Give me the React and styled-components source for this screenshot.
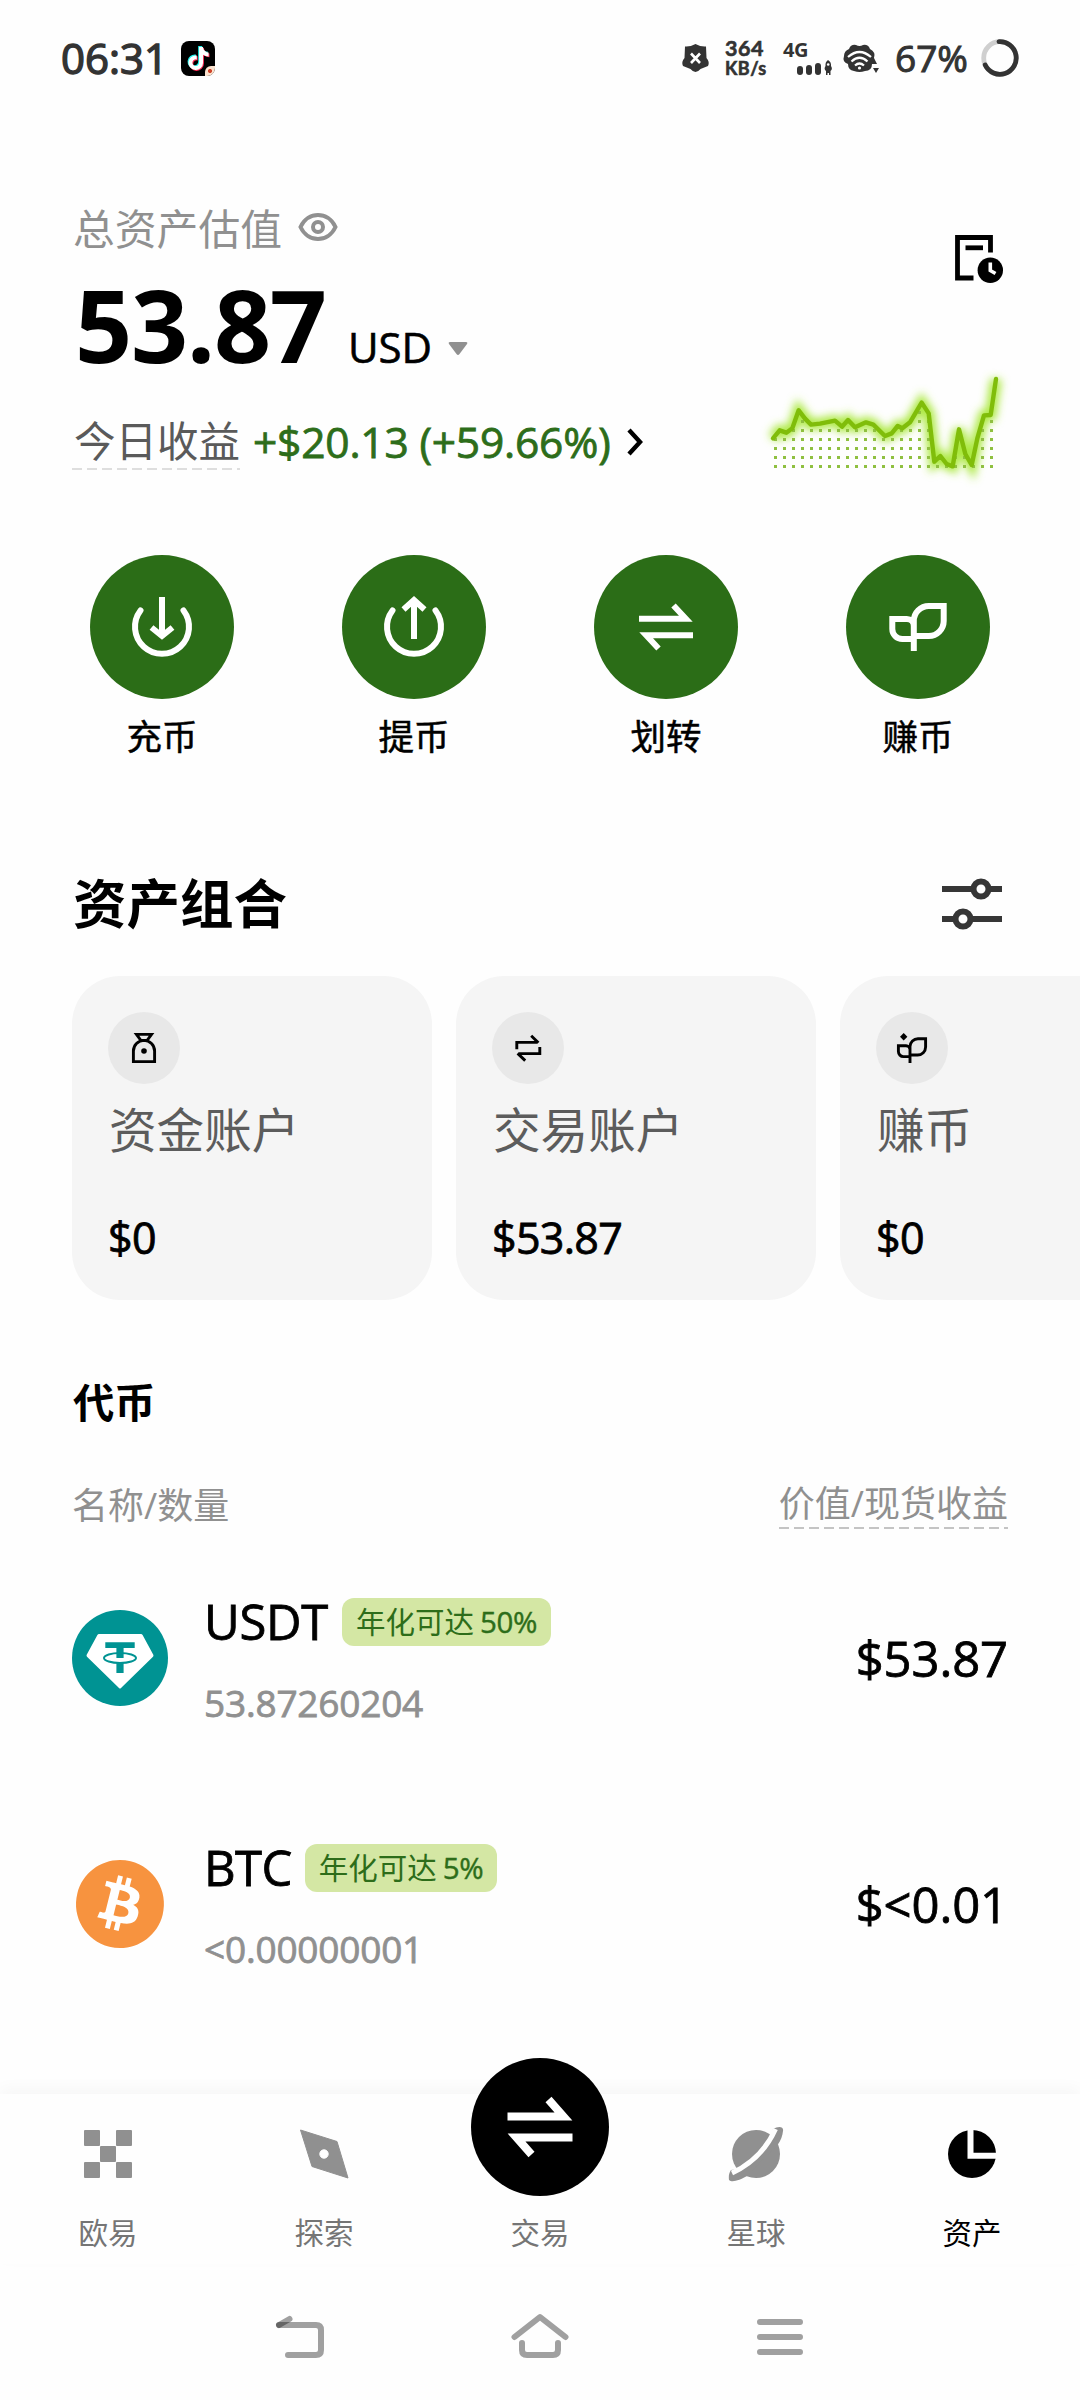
import React from "react";
import styled, { createGlobalStyle } from "styled-components";
import { FaTiktok } from "react-icons/fa6";
import { SiBitcoin } from "react-icons/si";

const Global = createGlobalStyle`
  * { box-sizing: border-box; }
  body {
    margin: 0;
    background: #fefefe;
    font-family: "Open Sans", "Noto Sans CJK SC", sans-serif;
    color: #000;
  }
  svg { display: block; flex: none; overflow: visible; }
`;

const Screen = styled.div`
  width: 1080px;
  height: 2400px;
  overflow: hidden;
  display: flex;
  flex-direction: column;
  white-space: nowrap;
`;

/* status bar */
const StatusBar = styled.header`
  height: 116px;
  padding: 0 61px 0 61px;
  display: flex;
  align-items: center;
  color: #333;
`;
const Clock = styled.span`
  width: 120px;
  font-size: 42px;
  line-height: 60px;
  -webkit-text-stroke: 1.4px currentColor;
`;
const AppBadge = styled.span`
  width: 34px;
  height: 35px;
  border-radius: 8px;
  background: #000;
  display: grid;
  place-items: center;
  overflow: hidden;
`;
const Layer = styled.span`
  grid-area: 1 / 1;
  color: ${(p) => p.$color};
  transform: translate(${(p) => p.$shift}px, ${(p) => p.$shift}px);
`;
const Corner = styled.span`
  grid-area: 1 / 1;
  place-self: end;
  width: 10px;
  height: 10px;
  border-radius: 6px 0 0 0;
  background: radial-gradient(circle at 50% 50%, #d0452b 1.6px, #fbe3cf 2.4px);
`;
const StatusRight = styled.div`
  margin-left: auto;
  display: flex;
  align-items: center;
`;
const Speed = styled.div`
  width: 42px;
  margin: 0 16px;
  display: flex;
  flex-direction: column;
  font-family: Lato, "Open Sans", sans-serif;
  font-weight: 700;
  font-size: 21.5px;
  line-height: 20px;
  letter-spacing: 0.5px;
  -webkit-text-stroke: 0.6px currentColor;
`;
const Unit = styled.span`
  font-size: 18px;
  line-height: 20px;
`;
const Signal = styled.div`
  width: 50px;
  margin-right: 10px;
  display: flex;
  flex-direction: column;
  font-weight: 700;
  font-size: 20px;
  line-height: 19px;
  letter-spacing: -0.5px;
`;
const SignalBars = styled.svg`
  align-self: flex-end;
`;
const Percent = styled.span`
  width: 74px;
  margin: 0 12px 0 15px;
  font-size: 37px;
  line-height: 50px;
  -webkit-text-stroke: 1px currentColor;
`;

/* overview */
const Overview = styled.section`
  height: 358px;
  padding: 81px 72px 0;
  display: flex;
  justify-content: space-between;
`;
const OverviewMain = styled.div`
  display: flex;
  flex-direction: column;
`;
const OverviewSide = styled.div`
  display: flex;
  flex-direction: column;
  align-items: flex-end;
  padding-top: 35px;
  gap: 85px;
`;
const LabelRow = styled.div`
  height: 60px;
  padding: 0 0 1px 1px;
  display: flex;
  align-items: center;
  gap: 16px;
  font-size: 41.8px;
  color: #909090;
`;
const TotalRow = styled.div`
  height: 155px;
  padding-top: 7px;
  display: flex;
  align-items: baseline;
`;
const Total = styled.span`
  font-size: 100px;
  line-height: 120px;
  font-weight: 700;
  letter-spacing: -1.3px;
  width: 276px;
  padding-left: 3px;
`;
const Currency = styled.span`
  width: 100px;
  font-size: 42px;
  letter-spacing: -0.1px;
  -webkit-text-stroke: 0.6px currentColor;
`;
const TodayRow = styled.div`
  height: 60px;
  display: flex;
  align-items: center;
`;
const TodayLabel = styled.span`
  height: 56px;
  line-height: 55px;
  width: 168px;
  padding-left: 2px;
  font-size: 41.5px;
  color: #5a5a5a;
  background: repeating-linear-gradient(90deg, #dedede 0 10px, transparent 10px 15px) bottom / 100% 2px no-repeat;
`;
const Gain = styled.span`
  width: 356px;
  margin: 0 18px 0 13px;
  font-size: 42.5px;
  line-height: 54px;
  letter-spacing: -0.2px;
  color: #2d6d1a;
  -webkit-text-stroke: 0.8px currentColor;
`;

/* quick actions */
const Actions = styled.nav`
  height: 370px;
  padding: 81px 36px 0;
  display: grid;
  grid-template-columns: repeat(4, 252px);
`;
const Action = styled.div`
  display: flex;
  flex-direction: column;
  align-items: center;
  gap: 12px;
  font-size: 35.5px;
  line-height: 50px;
  -webkit-text-stroke: 0.5px currentColor;
`;
const ActionDisc = styled.span`
  width: 144px;
  height: 144px;
  border-radius: 50%;
  background: #2b6d17;
  display: grid;
  place-items: center;
`;

/* portfolio */
const SectionHead = styled.div`
  height: 132px;
  padding: 0 78px 12px 73px;
  display: flex;
  justify-content: space-between;
  align-items: center;
`;
const SectionTitle = styled.h2`
  margin: 0;
  font-size: 53.5px;
  line-height: 70px;
  font-weight: 700;
`;
const Cards = styled.div`
  display: flex;
  gap: 24px;
  padding-left: 72px;
`;
const Card = styled.article`
  flex: none;
  width: 360px;
  height: 324px;
  padding: 36px 36px 30px;
  border-radius: 48px;
  background: #f5f5f5;
  display: flex;
  flex-direction: column;
`;
const CardIcon = styled.span`
  flex: none;
  width: 72px;
  height: 72px;
  border-radius: 50%;
  background: #e8e8e8;
  display: grid;
  place-items: center;
`;
const CardName = styled.span`
  margin-top: 14px;
  padding-left: 1px;
  font-size: 47.6px;
  line-height: 64px;
  color: #5c5c5c;
`;
const CardAmount = styled.span`
  margin-top: 46px;
  font-size: 43px;
  line-height: 60px;
  letter-spacing: -0.7px;
  -webkit-text-stroke: 0.8px currentColor;
`;

/* tokens */
const TokenTitle = styled.h3`
  margin: 72px 73px 0;
  font-size: 41.3px;
  line-height: 60px;
  font-weight: 700;
`;
const TokenHead = styled.div`
  margin: 45px 72px 0;
  height: 58px;
  display: flex;
  justify-content: space-between;
  align-items: flex-start;
  font-size: 36px;
  line-height: 58px;
  color: #909090;
`;
const Sortable = styled.span`
  height: 52px;
  line-height: 54px;
  background: repeating-linear-gradient(90deg, #c4c4c4 0 10px, transparent 10px 15px) bottom / 100% 2px no-repeat;
`;
const TokenRow = styled.div`
  height: 246px;
  padding: 0 72px;
  display: flex;
  align-items: center;
`;
const Logo = styled.span`
  width: 96px;
  height: 96px;
  margin-right: 36px;
  display: grid;
  place-items: center;
`;
const TokenInfo = styled.div`
  display: flex;
  flex-direction: column;
  gap: 24px;
`;
const NameLine = styled.div`
  height: 66px;
  display: flex;
  align-items: center;
  gap: 12px;
`;
const Symbol = styled.span`
  width: ${(p) => p.$width}px;
  font-size: 49px;
  line-height: 66px;
  letter-spacing: ${(p) => p.$tracking}px;
  -webkit-text-stroke: 0.8px currentColor;
`;
const Badge = styled.span`
  height: 48px;
  width: ${(p) => p.$width}px;
  margin-top: 1px;
  display: flex;
  justify-content: center;
  gap: 6px;
  border-radius: 12px;
  background: #d4e7a4;
  color: #2d6d1a;
  font-size: 29.5px;
  line-height: 48px;
`;
const Rate = styled.span`
  letter-spacing: -0.3px;
  -webkit-text-stroke: 0.4px currentColor;
`;
const Holding = styled.span`
  font-size: 37px;
  line-height: 50px;
  color: #909090;
  letter-spacing: -0.2px;
  -webkit-text-stroke: 0.8px currentColor;
`;
const Value = styled.span`
  margin-left: auto;
  font-size: 49px;
  letter-spacing: -0.1px;
  -webkit-text-stroke: 0.8px currentColor;
`;

/* bottom bars */
const TabBar = styled.nav`
  margin-top: auto;
  height: 170px;
  flex: none;
  display: grid;
  grid-template-columns: repeat(5, 216px);
  background: #fefefe;
  box-shadow: 0 -6px 14px rgba(0, 0, 0, 0.03);
`;
const Tab = styled.div`
  display: flex;
  flex-direction: column;
  align-items: center;
  justify-content: space-between;
  height: 160px;
  padding-top: 36px;
  font-size: 29.5px;
  line-height: 42px;
  color: ${(p) => (p.$active ? "#000" : "#757575")};
`;
const TradeDisc = styled.span`
  flex: none;
  width: 138px;
  height: 138px;
  margin-top: -72px;
  border-radius: 50%;
  background: #000;
  display: grid;
  place-items: center;
`;
const SystemNav = styled.footer`
  height: 136px;
  flex: none;
  padding: 45px 276px 0;
  display: flex;
  justify-content: space-between;
`;

const Icon = ({ size, children, stroke = "#fff", width = 6, ...rest }) => (
  <svg
    width={size}
    height={size}
    viewBox={`${-size / 2} ${-size / 2} ${size} ${size}`}
    fill="none"
    stroke={stroke}
    strokeWidth={width}
    {...rest}
  >
    {children}
  </svg>
);

const TRACE = [
  [99, 715], [119, 691], [139, 698], [157, 685], [176, 631], [195, 656], [213, 674], [240, 671],
  [285, 662], [306, 680], [324, 660], [345, 682], [378, 667], [400, 674], [435, 708], [455, 700],
  [473, 678], [487, 685], [510, 667], [545, 608], [566, 640], [583, 785], [601, 768], [620, 792],
  [638, 799], [657, 688], [676, 762], [695, 795], [712, 715], [732, 646], [752, 645], [768, 537],
].map(([x, y]) => [x / 3, y / 3]);

const Sparkline = () => {
  const line = TRACE.map((p) => p.join(",")).join(" ");
  const dots = [];
  for (let c = 0; c < 25; c++)
    for (let r = 0; r < 9; r++)
      dots.push(<rect key={`${c}-${r}`} x={34 + c * 9} y={265 - r * 9} width="3" height="3" />);
  return (
    <svg width="236" height="100" viewBox="32 171 236 100">
      <defs>
        <clipPath id="under">
          <polygon points={`33,272 ${line} 256,272`} />
        </clipPath>
        <filter id="glow" x="-20%" y="-40%" width="140%" height="180%">
          <feGaussianBlur stdDeviation="4.5" />
        </filter>
      </defs>
      <polyline points={line} fill="none" stroke="#a9e83a" strokeWidth="11" filter="url(#glow)" />
      <g fill="#8fc040" clipPath="url(#under)">{dots}</g>
      <polyline points={line} fill="none" stroke="#80bd0a" strokeWidth="4.4" strokeLinejoin="round" strokeLinecap="round" />
    </svg>
  );
};

const Arc = <path d="M-21.5-16.5A27 27 0 1 0 21.5-16.5" strokeLinecap="round" />;
const actions = [
  { label: "充币", art: <>{Arc}<path d="M0-30V9M-10.5 0.5L0 9L10.5 0.5" /></> },
  { label: "提币", art: <>{Arc}<path d="M0 12V-27M-10.5-17.5L0-27L10.5-17.5" /></> },
  { label: "划转", art: <path d="M-27-8.3H19.8L7.5-21.5M27 8.3H-19.8L-7.5 21.5" /> },
  {
    label: "赚币",
    art: (
      <path d="M-4.2 24V-6A15 15 0 0 1 10.8-21H25.7V-6A15 15 0 0 1 10.8 9H-4.2M-4.2 12V-1A7 7 0 0 0-11.2-8H-25.7V2A10 10 0 0 0-15.7 12H-4.2" />
    ),
  },
];

const cards = [
  {
    name: "资金账户",
    amount: "$0",
    art: (
      <>
        <path d="M-7.5-13.6H7.5L3-7.5H-3ZM-10.6 13.6V3A10.6 10.6 0 0 1 10.6 3V13.6Z" />
        <circle cy="3" r="2.8" fill="#000" stroke="none" />
      </>
    ),
  },
  {
    name: "交易账户",
    amount: "$53.87",
    art: <path d="M-11.2 1.2V-5.6H9.5M3.2-12.2L10.4-5.2M11.8-1V5.6H-9.5M-2.8 12.6L-10.4 5.4" />,
  },
  {
    name: "赚币",
    amount: "$0",
    art: (
      <>
        <path d="M-2 15V-1.5A8 8 0 0 1 6-9.3H13.6V-1A8 8 0 0 1 5.6 7H-2M-2 8.6V1.5A4 4 0 0 0-6-2.3H-13.6V3.6A5 5 0 0 0-8.6 8.6H-2" />
        <path d="M-8.3-15L-4.6-11.3L-8.3-7.6L-12-11.3Z" fill="#000" stroke="none" />
      </>
    ),
  },
];

const TetherLogo = () => (
  <Icon size={96} stroke="none">
    <circle r="48" fill="#009393" />
    <path d="M-21-24H21Q22-24 22.6-23L33.3-3.2Q33.8-2 33-1.2L1 30Q0 31-1 30L-33-1.2Q-33.8-2-33.3-3.2L-22.6-23Q-22-24-21-24Z" fill="#fff" />
    <path d="M-14.7-15.7H14.7V-10H3.6V0H-3.6V-10H-14.7ZM-3.6 5H3.6V15H-3.6Z" fill="#009393" />
    <ellipse rx="16" ry="5" stroke="#009393" strokeWidth="2" />
  </Icon>
);

const tokens = [
  { symbol: "USDT", width: 126, tracking: -0.3, rate: "50%", badge: 209, holding: "53.87260204", value: "$53.87", logo: <TetherLogo /> },
  { symbol: "BTC", width: 89, tracking: -0.6, rate: "5%", badge: 192, holding: "<0.00000001", value: "$<0.01", logo: <SiBitcoin size={88} color="#f7933f" /> },
];

export default function App() {
  return (
    <Screen>
      <Global />
      <StatusBar>
        <Clock>06:31</Clock>
        <AppBadge>
          <Layer $color="#25f4ee" $shift={-0.9}><FaTiktok size={23} /></Layer>
          <Layer $color="#fe2c55" $shift={0.9}><FaTiktok size={23} /></Layer>
          <Layer $color="#fff" $shift={0}><FaTiktok size={23} /></Layer>
          <Corner />
        </AppBadge>
        <StatusRight>
          <svg width="27" height="29" viewBox="0 0 27 29">
            <path d="M3 2.5Q8 3 13.500 0Q19 3 24 2.500L24.500 14Q28 18 26 22L18.500 25Q13.500 31 8.500 25L1 22Q-1 18 2.500 14Z" fill="#333" />
            <path d="M9 9.500L18 19M18 9.500L9 19" stroke="#fff" strokeWidth="2.600" />
          </svg>
          <Speed>
            364
            <Unit>KB/s</Unit>
          </Speed>
          <Signal>
            4G
            <SignalBars width="36" height="17" viewBox="0 0 36 17">
              <g fill="#333">
                <rect x="0" y="7" width="6" height="9" rx="3" />
                <rect x="9" y="6" width="6" height="10" rx="3" />
                <rect x="18" y="4" width="6" height="12" rx="3" />
                <path d="M31 1Q34.500 3 34 7Q36 10 33.500 12V16H32V14H30.500V16H29V12Q26.500 10 28.500 7Q28 3 31 1Z" />
              </g>
              <circle cx="31.200" cy="5.500" r="1.300" fill="#fff" />
            </SignalBars>
          </Signal>
          <svg width="37" height="29" viewBox="0 0 37 29">
            <path d="M6 5Q8 0 13 1Q16.500 3 20 1Q25 0 27 5Q33 8 31 14L34 20H29Q29 27 22 27Q16.500 29 11 27Q5 26 5 20Q-1 18 1 12Q1 7 6 5Z" fill="#333" />
            <g fill="none" stroke="#fff" strokeWidth="2.200">
              <path d="M5 13Q16.500 3 28 13M8.500 17.500Q16.500 10 24.500 17.500M12 21.500Q16.500 17.500 21 21.500" />
            </g>
            <circle cx="16.500" cy="24" r="1.600" fill="#fff" />
            <path d="M30 24H36L33 29Z" fill="#333" />
          </svg>
          <Percent>67%</Percent>
          <Icon size={38} width={4.8} stroke="#333">
            <circle r="16.300" stroke="#cfcfcf" />
            <path d="M-1-16.300A16.300 16.300 0 1 1-14.800 7" strokeLinecap="round" />
          </Icon>
        </StatusRight>
      </StatusBar>

      <Overview>
        <OverviewMain>
          <LabelRow>
            总资产估值
            <svg width="40" height="28" viewBox="0 0 40 28" fill="none" stroke="#909090" strokeWidth="4">
              <path d="M2.500 14C10-2 30-2 37.500 14C30 30 10 30 2.500 14Z" />
              <circle cx="20" cy="14" r="5" />
            </svg>
          </LabelRow>
          <TotalRow>
            <Total>53.87</Total>
            <Currency>USD</Currency>
            <svg width="20" height="21" viewBox="0 0 20 21">
              <path d="M2 0H18Q20 0 19 2L11.500 12Q10 14 8.500 12L1 2Q0 0 2 0Z" fill="#909090" />
            </svg>
          </TotalRow>
          <TodayRow>
            <TodayLabel>今日收益</TodayLabel>
            <Gain>+$20.13 (+59.66%)</Gain>
            <svg width="16" height="28" viewBox="0 0 16 28">
              <path d="M2 2L13 14L2 26" fill="none" stroke="#000" strokeWidth="4.400" />
            </svg>
          </TodayRow>
        </OverviewMain>
        <OverviewSide>
          <svg width="54" height="54" viewBox="954 232 54 54">
            <path d="M973.500 278H957.500V237.500H990.500V252.500" fill="none" stroke="#000" strokeWidth="4.800" />
            <path d="M965.500 247.800H983" stroke="#000" strokeWidth="4.800" />
            <circle cx="990.300" cy="270.300" r="12.700" fill="#000" />
            <path d="M990.300 262.500V270.500L995.500 273.500" fill="none" stroke="#fff" strokeWidth="3.600" />
          </svg>
          <Sparkline />
        </OverviewSide>
      </Overview>

      <Actions>
        {actions.map((a) => (
          <Action key={a.label}>
            <ActionDisc><Icon size={72}>{a.art}</Icon></ActionDisc>
            {a.label}
          </Action>
        ))}
      </Actions>

      <SectionHead>
        <SectionTitle>资产组合</SectionTitle>
        <Icon size={60} stroke="#363636">
          <path d="M-30-15H0M18-15H30M-30 15H-18M0 15H30" />
          <circle cx="9" cy="-15" r="7.500" />
          <circle cx="-9" cy="15" r="7.500" />
        </Icon>
      </SectionHead>
      <Cards>
        {cards.map((c) => (
          <Card key={c.name}>
            <CardIcon><Icon size={36} stroke="#000" width={2.9}>{c.art}</Icon></CardIcon>
            <CardName>{c.name}</CardName>
            <CardAmount>{c.amount}</CardAmount>
          </Card>
        ))}
      </Cards>

      <TokenTitle>代币</TokenTitle>
      <TokenHead>
        <span>名称/数量</span>
        <Sortable>价值/现货收益</Sortable>
      </TokenHead>
      {tokens.map((t) => (
        <TokenRow key={t.symbol}>
          <Logo>{t.logo}</Logo>
          <TokenInfo>
            <NameLine>
              <Symbol $width={t.width} $tracking={t.tracking}>{t.symbol}</Symbol>
              <Badge $width={t.badge}>
                <span>年化可达</span>
                <Rate>{t.rate}</Rate>
              </Badge>
            </NameLine>
            <Holding>{t.holding}</Holding>
          </TokenInfo>
          <Value>{t.value}</Value>
        </TokenRow>
      ))}

      <TabBar>
        <Tab>
          <Icon size={48} stroke="none">
            {[[-24, -24], [8, -24], [-8, -8], [-24, 8], [8, 8]].map(([x, y]) => (
              <rect key={`${x}${y}`} x={x} y={y} width="16" height="16" rx="1" fill="#909090" />
            ))}
          </Icon>
          欧易
        </Tab>
        <Tab>
          <Icon size={48} width={1}>
            <path d="M-23.500-24L13-12.500L24 24L-12 12.500Z" fill="#909090" stroke="#909090" strokeLinejoin="round" />
            <circle r="4.200" fill="#fff" />
          </Icon>
          探索
        </Tab>
        <Tab>
          <TradeDisc>
            <Icon size={80} width={8}>
              <path d="M-32.500-10.500H23.500L8.500-27.500M32.500 10.500H-23.500L-8.500 27.500" />
            </Icon>
          </TradeDisc>
          交易
        </Tab>
        <Tab>
          <Icon size={48} stroke="none">
            <circle r="24" fill="#909090" />
            <path d="M17-25C22-28 28-28 27-23C26.500-18 25-14 21.500-9L-9 22C-16 26-24 29-27 26C-27.500 22-27 19-25 16L-10 14L14-10Z" fill="#909090" />
            <path d="M-24 19Q6 5 19.500-25" stroke="#fefefe" strokeWidth="5" />
          </Icon>
          星球
        </Tab>
        <Tab $active>
          <Icon size={48} stroke="#fefefe">
            <circle r="24" fill="#000" stroke="none" />
            <path d="M-1.500-26V1.800H26" />
          </Icon>
          资产
        </Tab>
      </TabBar>

      <SystemNav>
        <svg width="48" height="54" viewBox="276 2309 48 54" fill="none" stroke="#000" strokeOpacity="0.37" strokeWidth="6" strokeLinecap="round">
          <path d="M279 2325H316Q321 2325 321 2330V2350Q321 2355 316 2355H288" />
          <path d="M279 2325L289.500 2319" />
        </svg>
        <svg width="54" height="54" viewBox="513 2309 54 54" fill="none" stroke="#a0a0a0" strokeWidth="6" strokeLinecap="round" strokeLinejoin="round">
          <path d="M514.500 2337L540 2317L565.500 2337M522 2343V2350Q522 2355 527 2355H553Q558 2355 558 2350V2343" />
        </svg>
        <svg width="48" height="54" viewBox="756 2309 48 54" stroke="#a0a0a0" strokeWidth="6" strokeLinecap="round">
          <path d="M760 2322H800M760 2337H800M760 2352H800" />
        </svg>
      </SystemNav>
    </Screen>
  );
}
